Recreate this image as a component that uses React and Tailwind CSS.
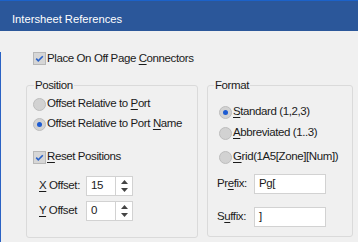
import React from 'react';

function Check() {
  return (
    <span className="flex h-[13px] w-[13px] shrink-0 items-center justify-center border border-[#b8b8b8] bg-[#d6d6d6]">
      <svg viewBox="0 0 11 11" className="h-[11px] w-[11px]">
        <path d="M2.2 5.6l2.1 2.2L8.8 3.2" fill="none" stroke="#2a62c8" strokeWidth="1.6" />
      </svg>
    </span>
  );
}

function Radio({ on }) {
  return (
    <span className="flex h-[13px] w-[13px] shrink-0 items-center justify-center rounded-full border border-[#bdbdbd] bg-[#d2d2d2]">
      {on && <span className="h-[5px] w-[5px] rounded-full bg-[#1c5bd2]" />}
    </span>
  );
}

function U({ children }) {
  return <span className="underline decoration-1 underline-offset-[2px]">{children}</span>;
}

function Spinner() {
  return (
    <div className="flex h-[20px] w-[17px] flex-col items-center justify-center gap-[4px] border border-l-0 border-[#d2d2d2] bg-white">
      <svg viewBox="0 0 7 4" className="h-[4px] w-[7px]">
        <path d="M3.5 0L7 4H0z" fill="#444" />
      </svg>
      <svg viewBox="0 0 7 4" className="h-[4px] w-[7px]">
        <path d="M0 0h7L3.5 4z" fill="#444" />
      </svg>
    </div>
  );
}

function Field({ value, w }) {
  return (
    <div className={`flex h-[20px] items-center border border-[#d2d2d2] bg-white pl-[4px] ${w}`}>
      {value}
    </div>
  );
}

export default function App() {
  return (
    <div className="h-[242px] w-[358px] overflow-hidden bg-[#f0f0f0] font-['Liberation_Sans',Arial,sans-serif] text-[11.5px] tracking-[-0.4px] text-[#1b1b1b]">
      {/* Title bar */}
      <div className="h-[31px] border-t border-[#1c62c9] bg-[#2b579a] pl-[12px] pt-[11px] text-[11.2px] leading-[14px] tracking-normal text-white">
        Intersheet References
      </div>

      <div className="h-[211px] border-l border-[#2a62c4] pl-[25px]">
        <div className="mt-[21px] flex h-[13px] items-center gap-[1px] pl-[7px]">
          <Check />
          <span>
            Place On Off Page <U>C</U>onnectors
          </span>
        </div>

        <div className="mt-[20px] flex gap-[9px]">
          {/* Position */}
          <div className="relative h-[153px] w-[172px] rounded-[3px] border border-[#dadada]">
            <span className="absolute -top-[8px] left-[7px] bg-[#f0f0f0] px-[1px] leading-[15px]">Position</span>
            <div className="flex flex-col pl-[6px] pt-[8px]">
              <div className="flex h-[20px] items-center gap-[1px]">
                <Radio />
                <span>
                  Offset Relative to <U>P</U>ort
                </span>
              </div>
              <div className="flex h-[20px] items-center gap-[1px]">
                <Radio on />
                <span>
                  Offset Relative to Port <U>N</U>ame
                </span>
              </div>
              <div className="mt-[13px] flex h-[20px] items-center gap-[1px]">
                <Check />
                <span>
                  <U>R</U>eset Positions
                </span>
              </div>
              <div className="mt-[9px] flex h-[20px] items-center pl-[6px]">
                <span className="w-[47px]">
                  <U>X</U> Offset:
                </span>
                <Field value="15" w="w-[30px]" />
                <Spinner />
              </div>
              <div className="mt-[5px] flex h-[20px] items-center pl-[6px]">
                <span className="w-[47px]">
                  <U>Y</U> Offset
                </span>
                <Field value="0" w="w-[30px]" />
                <Spinner />
              </div>
            </div>
          </div>

          {/* Format */}
          <div className="relative h-[152px] w-[146px] rounded-[3px] border border-[#dadada]">
            <span className="absolute -top-[8px] left-[6px] bg-[#f0f0f0] px-[1px] leading-[15px]">Format</span>
            <div className="flex flex-col pl-[11px] pt-[16px]">
              <div className="flex h-[20px] items-center gap-[1px]">
                <Radio on />
                <span>
                  <U>S</U>tandard (1,2,3)
                </span>
              </div>
              <div className="mt-[1px] flex h-[20px] items-center gap-[1px]">
                <Radio />
                <span>
                  <U>A</U>bbreviated (1..3)
                </span>
              </div>
              <div className="mt-[4px] flex h-[20px] items-center gap-[1px]">
                <Radio />
                <span>
                  <U>G</U>rid(1A5[Zone][Num])
                </span>
              </div>
              <div className="mt-[7px] -ml-[2px] flex h-[20px] items-center">
                <span className="w-[37px]">
                  Pr<U>e</U>fix:
                </span>
                <Field value="Pg[" w="w-[72px]" />
              </div>
              <div className="mt-[13px] -ml-[2px] flex h-[20px] items-center">
                <span className="w-[37px]">
                  S<U>u</U>ffix:
                </span>
                <Field value="]" w="w-[72px]" />
              </div>
            </div>
          </div>
        </div>
      </div>
    </div>
  );
}
